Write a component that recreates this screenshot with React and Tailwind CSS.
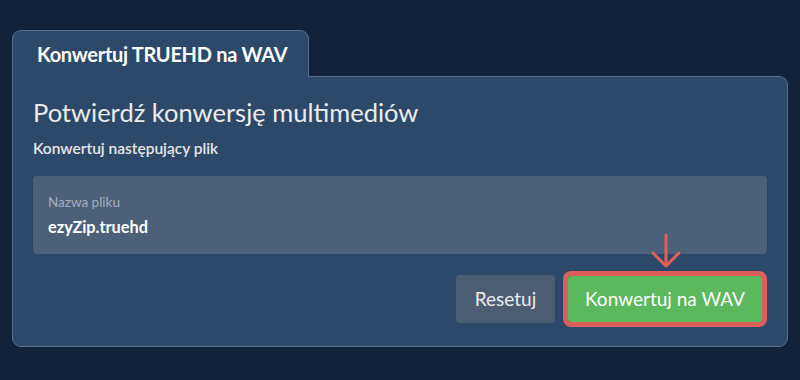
import React from "react"

// Conversion confirmation panel with tab header
const App = () => {
  return (
    <div
      className="w-[800px] h-[380px] bg-[#11233a] pt-[30px] px-[12px]"
      style={{ fontFamily: "Lato, 'Noto Sans', sans-serif" }}
    >
      {/* Tab */}
      <div className="flex">
        <div className="relative z-10 -mb-px h-[47px] w-[297px] flex items-center pl-[24px] bg-[#2d4969] border border-b-0 border-[#56708f] rounded-t-[9px]">
          <span className="text-[20px] font-bold text-white tracking-[-0.3px]">Konwertuj TRUEHD na WAV</span>
        </div>
      </div>

      {/* Panel */}
      <div className="w-[776px] bg-[#2d4969] border border-[#56708f] rounded-[9px] rounded-tl-none pt-[20px] pb-[23px] pl-[20px] pr-[20px]">
        <h1 className="text-[25.5px] leading-[31px] text-[#ececec]">Potwierdź konwersję multimediów</h1>
        <p className="mt-[10px] text-[15.5px] leading-[20px] font-semibold text-[#e6e6e6]">Konwertuj następujący plik</p>

        <div className="mt-[18px] h-[78px] bg-[#4b6079] rounded-[4px] pl-[15px] pt-[18px]">
          <div className="text-[13.5px] leading-[16px] text-[#a3b0bf]">Nazwa pliku</div>
          <div className="mt-[7px] text-[16.3px] leading-[20px] font-bold text-white">ezyZip.truehd</div>
        </div>

        <div className="relative mt-[21px] flex justify-end items-center gap-[13px] pr-[5px]">
          <button className="h-[48px] w-[99px] rounded-[4px] bg-[#4b5d72] text-[19px] text-[#ececec]">
            Resetuj
          </button>
          <button className="h-[46px] w-[194px] bg-[#5cb85c] text-[19px] text-white outline-[5px] outline-solid outline-[#dd5f5c] rounded-[3px]">
            Konwertuj na WAV
          </button>
          <svg
            className="absolute right-[86px] -top-[42px]"
            width="30"
            height="36"
            viewBox="0 0 30 36"
            fill="none"
            stroke="#df5f5a"
            strokeWidth="3"
            strokeLinecap="round"
            strokeLinejoin="round"
          >
            <path d="M15 2 V33 M2 20 L15 33 L28 20" />
          </svg>
        </div>
      </div>
    </div>
  )
}

export default App
